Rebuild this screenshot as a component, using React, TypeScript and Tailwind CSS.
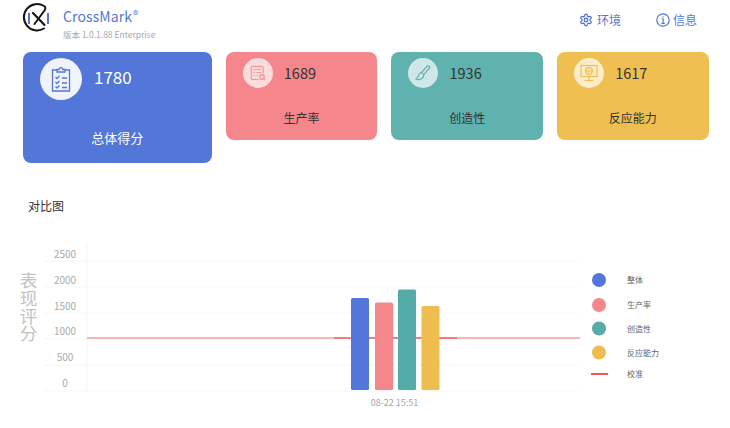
import React from "react";

const Logo = () => (
  <svg width="32" height="32" viewBox="0 0 32 32" fill="none">
    <path d="M7 11V22" stroke="#5277d8" strokeWidth="2" />
    <path d="M26 11V22" stroke="#5277d8" strokeWidth="2" />
    <path d="M22 26.5A13.2 13.2 0 1 1 22 4C24 5 23.5 7 22.5 8.5L12.5 22" stroke="#161616" strokeWidth="2" strokeLinecap="round" />
    <path d="M11 11L22.5 23" stroke="#161616" strokeWidth="2.2" strokeLinecap="round" />
  </svg>
);

const Clipboard = () => (
  <svg width="20" height="25" viewBox="0 0 20 25" fill="none" stroke="#5277d8" strokeWidth="1.3">
    <path d="M6 3H1.5V24H18.5V3H14" />
    <path d="M6 5V2.5H8.2A1.8 1.8 0 0 1 11.8 2.5H14V5Z" />
    <path d="M4.5 10L6 11.5L8.5 9M4.5 15L6 16.5L8.5 14M4.5 19.5L6 21L8.5 18.5" />
    <path d="M11 11H16M11 16H16M11 20.5H16" />
  </svg>
);

const ListSearch = () => (
  <svg width="16" height="16" viewBox="0 0 16 16" fill="none" stroke="#f6969b" strokeWidth="1.2">
    <path d="M8.5 14.5H2.5A1.2 1.2 0 0 1 1.3 13.3V2.5A1.2 1.2 0 0 1 2.5 1.3H12A1.2 1.2 0 0 1 13.2 2.5V8.5" />
    <path d="M3.5 4.5H11M3.5 7.5H5M6.5 7.5H11M3.5 10.5H5M6.5 10.5H8" />
    <circle cx="12" cy="12" r="2.2" strokeWidth="1.4" />
    <path d="M13.5 13.5L15.2 15.2" strokeWidth="1.4" />
  </svg>
);

const Brush = () => (
  <svg width="16" height="16" viewBox="0 0 16 16" fill="none" stroke="#60b2ae" strokeWidth="1.2">
    <path d="M6.5 7.5L12.2 1.2C13.4 .2 15.4 1.8 14.5 3.2L8.8 9.6Z" />
    <path d="M6.5 7.5C4 7.6 3.8 9.5 3.4 11C3 12.5 1.8 13 1 14C4.5 15.8 8.6 13.6 8.8 9.6" />
  </svg>
);

const Monitor = () => (
  <svg width="18" height="18" viewBox="0 0 18 18" fill="none" stroke="#f0bf52" strokeWidth="1.2">
    <rect x="1" y="1.5" width="16" height="11" />
    <circle cx="9" cy="7" r="3.6" strokeWidth="1.1" />
    <path d="M5.4 7H12.6M9 3.4V10.6M7.2 3.8C6.2 5.5 6.2 8.5 7.2 10.2M10.8 3.8C11.8 5.5 11.8 8.5 10.8 10.2" strokeWidth=".8" />
    <path d="M9 12.5V16M4.5 16.5H13.5" />
  </svg>
);

const Gear = () => (
  <svg width="14" height="14" viewBox="0 0 24 24" fill="none" stroke="#5277d8" strokeWidth="2.2" strokeLinejoin="round">
    <path d="M12.22 2h-.44a2 2 0 0 0-2 2v.18a2 2 0 0 1-1 1.73l-.43.25a2 2 0 0 1-2 0l-.15-.08a2 2 0 0 0-2.73.73l-.22.38a2 2 0 0 0 .73 2.73l.15.1a2 2 0 0 1 1 1.72v.51a2 2 0 0 1-1 1.74l-.15.09a2 2 0 0 0-.73 2.73l.22.38a2 2 0 0 0 2.73.73l.15-.08a2 2 0 0 1 2 0l.43.25a2 2 0 0 1 1 1.73V20a2 2 0 0 0 2 2h.44a2 2 0 0 0 2-2v-.18a2 2 0 0 1 1-1.73l.43-.25a2 2 0 0 1 2 0l.15.08a2 2 0 0 0 2.73-.73l.22-.39a2 2 0 0 0-.73-2.73l-.15-.08a2 2 0 0 1-1-1.74v-.5a2 2 0 0 1 1-1.74l.15-.09a2 2 0 0 0 .73-2.73l-.22-.38a2 2 0 0 0-2.73-.73l-.15.08a2 2 0 0 1-2 0l-.43-.25a2 2 0 0 1-1-1.73V4a2 2 0 0 0-2-2z" />
    <circle cx="12" cy="12" r="3" />
  </svg>
);

const Info = () => (
  <svg width="14" height="14" viewBox="0 0 14 14" fill="none" stroke="#5277d8">
    <circle cx="7" cy="7" r="6.2" strokeWidth="1.2" />
    <path d="M5.6 6H7.2V10.4M5.4 10.4H8.8" strokeWidth="1.1" />
    <path d="M7 3.4V4.6" strokeWidth="1.4" />
  </svg>
);

const Chart = () => {
  const grid = [261, 287, 313, 339, 365, 391];
  const labels = ["2500", "2000", "1500", "1000", "500", "0"];
  const bars = [
    { x: 351, y: 298, w: 18, c: "#5277d8" },
    { x: 375, y: 302.5, w: 18, c: "#f5868b" },
    { x: 398, y: 289.5, w: 18, c: "#55aba7" },
    { x: 421.5, y: 306, w: 18, c: "#efbd4f" },
  ];
  const legend = [
    { y: 280, c: "#5277d8", t: "整体" },
    { y: 305, c: "#f5868b", t: "生产率" },
    { y: 328.5, c: "#55aba7", t: "创造性" },
    { y: 352.5, c: "#efbd4f", t: "反应能力" },
  ];
  return (
    <svg width="730" height="200" viewBox="0 228 730 200" className="block">
      <line x1="87" y1="243" x2="87" y2="391" stroke="#f4f4f4" />
      {grid.map((y) => (
        <line key={y} x1="44" x2="578" y1={y} y2={y} stroke="#f5f5f5" />
      ))}
      {labels.map((t, i) => (
        <text key={t} x="65" y={258 + i * 25.8} textAnchor="middle" fontSize="10" fill="#aaaaaa">{t}</text>
      ))}
      <text x="28.5" y="272" fontSize="17.6" fill="#c2c2c2" className="[writing-mode:vertical-rl]">表现评分</text>
      <line x1="87" x2="580" y1="338" y2="338" stroke="#f6b7b7" strokeWidth="2" />
      <line x1="334" x2="457" y1="338" y2="338" stroke="#f27d7d" strokeWidth="2" />
      {bars.map((b) => (
        <rect key={b.x} x={b.x} y={b.y} width={b.w} height={390 - b.y} rx="1.5" fill={b.c} />
      ))}
      <text x="394.5" y="406" textAnchor="middle" fontSize="9" fill="#a3a3a3">08-22 15:51</text>
      {legend.map((l) => (
        <g key={l.t}>
          <circle cx="599" cy={l.y} r="7" fill={l.c} />
          <text x="627" y={l.y + 3} fontSize="8" fill="#666666">{l.t}</text>
        </g>
      ))}
      <line x1="591" x2="608" y1="374" y2="374" stroke="#f01f1f" strokeWidth="1.5" />
      <text x="627" y="377" fontSize="8" fill="#666666">校准</text>
    </svg>
  );
};

const Card = ({ color, score, label, icon }: { color: string; score: string; label: string; icon: React.ReactNode }) => (
  <div className={`w-[151.4px] h-[88px] rounded-lg flex flex-col text-[#333333] ${color}`}>
    <div className="flex items-center pl-[17px] pt-[6px]">
      <div className="w-[30px] h-[30px] rounded-full bg-white/70 flex items-center justify-center">{icon}</div>
      <span className="ml-[11px] text-[14.5px] leading-[30px]">{score}</span>
    </div>
    <div className="text-center text-[12px] leading-[18px] mt-[21px]">{label}</div>
  </div>
);

export default function App() {
  return (
    <div className="w-[730px] h-[428px] bg-white overflow-hidden font-['Noto_Sans_CJK_SC','Noto_Sans',sans-serif]">
      <div className="h-[52px] flex pl-[22px]">
        <div className="pt-[2px]"><Logo /></div>
        <div className="ml-[9px] pt-[6px]">
          <div className="text-[14px] leading-[20px] text-[#5277d8] tracking-[0.1px]">
            CrossMark<span className="text-[11px] ml-[1px] -top-[3px] relative">®</span>
          </div>
          <div className="text-[8.5px] leading-[14px] text-[#a8a8a8]">版本 1.0.1.88 Enterprise</div>
        </div>
        <div className="ml-auto flex items-start pt-[12px] pr-[33px] text-[12px] leading-[16px] text-[#5277d8]">
          <div className="flex items-center gap-[4px]"><Gear /><span>环境</span></div>
          <div className="flex items-center gap-[3px] ml-[35px]"><Info /><span>信息</span></div>
        </div>
      </div>
      <div className="flex items-start pl-[23px] gap-[14.3px]">
        <div className="w-[188.5px] h-[111px] rounded-[8px] bg-[#5277d8] text-white">
          <div className="flex items-center pl-[17px] pt-[6px]">
            <div className="w-[42px] h-[42px] rounded-full bg-[#f1f3fb] flex items-center justify-center"><Clipboard /></div>
            <span className="ml-[12px] text-[17px] leading-[26px] -mt-[5px]">1780</span>
          </div>
          <div className="text-center text-[13px] leading-[18px] mt-[29px]">总体得分</div>
        </div>
        <Card color="bg-[#f5868b]" score="1689" label="生产率" icon={<ListSearch />} />
        <Card color="bg-[#60b2ae]" score="1936" label="创造性" icon={<Brush />} />
        <Card color="bg-[#f0bf52]" score="1617" label="反应能力" icon={<Monitor />} />
      </div>
      <div className="pl-[28px] mt-[34px] text-[12px] leading-[18px] text-[#333333] h-[31px]">对比图</div>
      <Chart />
    </div>
  );
}
